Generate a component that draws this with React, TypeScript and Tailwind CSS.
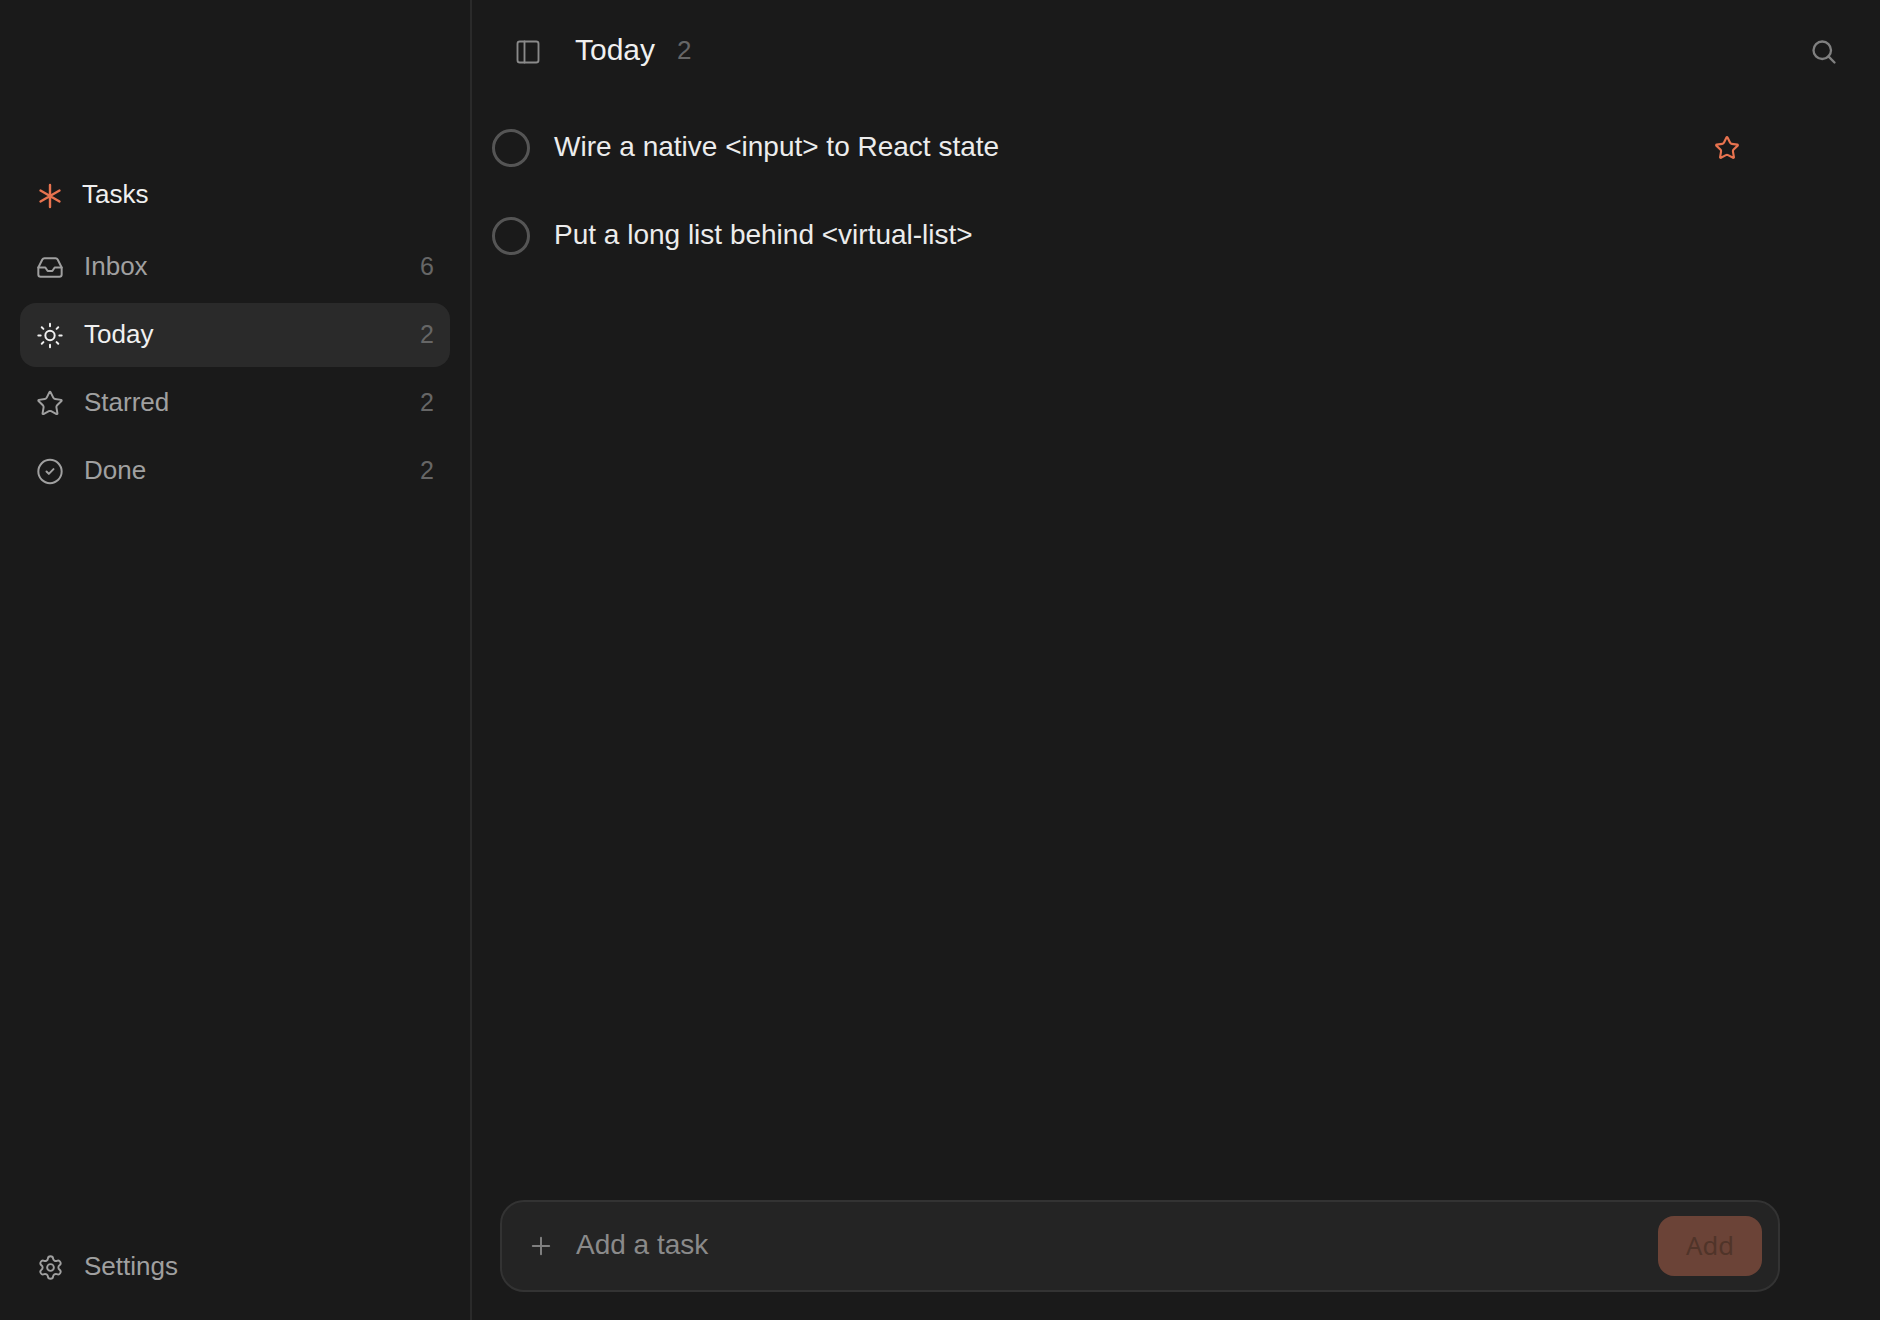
import { Inbox, Sun, Star, CircleCheck, Settings, PanelLeft, Plus } from "lucide-react";

const font = "font-['Liberation_Sans',Arial,sans-serif]";

function NavRow({ icon, label, count, active }: { icon: React.ReactNode; label: string; count: string; active?: boolean }) {
  return (
    <div className={`flex h-[64px] items-center rounded-[16px] pl-[16px] pr-[16px] ${active ? "bg-[#2a2a2a] text-[#f0f0f0]" : "text-[#a0a0a0]"}`}>
      <span className="flex w-[28px] shrink-0 items-center justify-center">{icon}</span>
      <span className="-mt-[2px] ml-[20px] flex-1 text-[26px] leading-[32px]">{label}</span>
      <span className="-mt-[2px] text-[25px] leading-[32px] text-[#666666]">{count}</span>
    </div>
  );
}

function TaskRow({ text, starred }: { text: string; starred?: boolean }) {
  return (
    <div className="flex h-[88px] items-center pl-[20px]">
      <span className="h-[38px] w-[38px] shrink-0 rounded-full border-[3px] border-[#555555]" />
      <span className="-mt-[2px] ml-[24px] flex-1 text-[28px] leading-[36px] text-[#ececec]">{text}</span>
      {starred && <Star size={26} strokeWidth={2} className="mr-[140px] text-[#e8734f]" />}
    </div>
  );
}

export default function App() {
  return (
    <div className={`flex h-[1320px] w-[1880px] bg-[#1a1a1a] ${font}`}>
      <aside className="flex w-[472px] shrink-0 flex-col border-r-[2px] border-[#2a2a2a] px-[20px] pb-[21px] pt-[166px]">
        <div className="flex h-[56px] items-center pl-[16px] text-[#f0f0f0]">
          <svg width="28" height="28" viewBox="0 0 28 28" fill="none" stroke="#e8734f" strokeWidth="2.4" strokeLinecap="round" className="mt-[3px] shrink-0">
            <path d="M14 3v22M4.5 8.5l19 11M23.5 8.5l-19 11" />
          </svg>
          <span className="ml-[18px] text-[26px] leading-[32px]">Tasks</span>
        </div>
        <nav className="mt-[13px] flex flex-col gap-[4px]">
          <NavRow icon={<Inbox size={29} strokeWidth={1.7} />} label="Inbox" count="6" />
          <NavRow icon={<Sun size={29} strokeWidth={1.7} />} label="Today" count="2" active />
          <NavRow icon={<Star size={29} strokeWidth={1.7} />} label="Starred" count="2" />
          <NavRow icon={<CircleCheck size={29} strokeWidth={1.7} />} label="Done" count="2" />
        </nav>
        <div className="mt-auto flex h-[64px] items-center pl-[16px] text-[#a0a0a0]">
          <span className="flex w-[28px] shrink-0 items-center justify-center"><Settings size={27} strokeWidth={1.7} /></span>
          <span className="-mt-[2px] ml-[20px] text-[26px] leading-[32px]">Settings</span>
        </div>
      </aside>
      <main className="flex min-w-0 flex-1 flex-col">
        <header className="flex h-[104px] shrink-0 items-center pl-[42px] pr-[42px]">
          <PanelLeft size={28} strokeWidth={1.6} className="text-[#8a8a8a]" />
          <h1 className="-mt-[4px] ml-[33px] text-[30px] font-normal leading-[36px] text-[#f0f0f0]">Today</h1>
          <span className="-mt-[4px] ml-[22px] text-[26px] leading-[32px] text-[#666666]">2</span>
          <svg width="28" height="28" viewBox="0 0 24 24" fill="none" stroke="#808080" strokeWidth="2" strokeLinecap="round" strokeLinejoin="round" className="ml-auto shrink-0">
            <circle cx="10.5" cy="10.5" r="7.5" />
            <path d="m21 21-5.2-5.2" />
          </svg>
        </header>
        <div className="flex-1">
          <TaskRow text="Wire a native <input> to React state" starred />
          <TaskRow text="Put a long list behind <virtual-list>" />
        </div>
        <div className="mb-[28px] ml-[28px] mr-[100px] flex h-[92px] shrink-0 items-center rounded-[24px] border-[2px] border-[#333333] bg-[#242424] pl-[25px] pr-[16px]">
          <Plus size={28} strokeWidth={1.7} className="text-[#808080]" />
          <span className="-mt-[2px] ml-[21px] flex-1 text-[28px] leading-[36px] text-[#8a8a8a]">Add a task</span>
          <button className="h-[60px] w-[104px] rounded-[16px] bg-[#6b4337] font-['Noto_Sans',sans-serif] text-[25.6px] text-[#503429]">Add</button>
        </div>
      </main>
    </div>
  );
}
